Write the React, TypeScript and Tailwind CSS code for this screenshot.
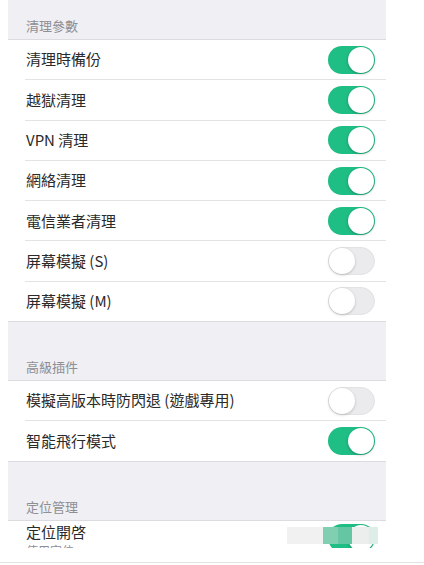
import React from 'react';

type Item = { label: string; on: boolean };

const CLEAN_ITEMS: Item[] = [
  { label: '清理時備份', on: true },
  { label: '越獄清理', on: true },
  { label: 'VPN 清理', on: true },
  { label: '網絡清理', on: true },
  { label: '電信業者清理', on: true },
  { label: '屏幕模擬 (S)', on: false },
  { label: '屏幕模擬 (M)', on: false },
];

const PLUGIN_ITEMS: Item[] = [
  { label: '模擬高版本時防閃退 (遊戲專用)', on: false },
  { label: '智能飛行模式', on: true },
];

const Toggle: React.FC<{ on: boolean }> = ({ on }) => (
  <div
    className={
      on
        ? 'relative w-[47px] h-[28px] rounded-full bg-[#1fbe85] shrink-0'
        : 'relative w-[47px] h-[28px] rounded-full bg-[#ebebed] border border-[#e2e2e5] shrink-0'
    }
  >
    <div
      className={
        on
          ? 'absolute top-[1px] right-[1px] w-[26px] h-[26px] rounded-full bg-white shadow-[0_1px_3px_rgba(0,0,0,0.25)]'
          : 'absolute top-[0px] left-[0px] w-[26px] h-[26px] rounded-full bg-white shadow-[0_1px_3px_rgba(0,0,0,0.2)]'
      }
    />
  </div>
);

const SectionHeader: React.FC<{ title: string; tall?: boolean }> = ({ title, tall }) => (
  <div
    className={
      (tall ? 'h-[59px]' : 'h-[40px]') +
      ' flex items-end pl-[18px] pb-[5px] border-b border-[#dcdce0]'
    }
  >
    <span className="text-[13px] leading-[16px] text-[#8e8e93]">{title}</span>
  </div>
);

const Section: React.FC<{ items: Item[] }> = ({ items }) => (
  <div className="bg-white border-b border-[#dcdce0]">
    {items.map((item, i) => (
      <div key={item.label} className="pl-[17px]">
        <div
          className={
            'flex items-center justify-between pr-[11px] ' +
            (i < items.length - 1 ? 'border-b border-[#e3e3e6] h-[40.3px]' : 'h-[39.3px]')
          }
        >
          <span className="pl-[1px] text-[15px] text-[#2a2a2a]">{item.label}</span>
          <Toggle on={item.on} />
        </div>
      </div>
    ))}
  </div>
);

export default function App() {
  return (
    <div
      className="w-[424px] h-[565px] bg-white overflow-hidden"
      style={{ fontFamily: '"Noto Sans CJK TC", "Noto Sans", sans-serif' }}
    >
      <div className="ml-[8px] w-[378px] h-[548px] overflow-hidden bg-[#efeff4]">
        <SectionHeader title="清理參數" />
        <Section items={CLEAN_ITEMS} />
        <SectionHeader title="高級插件" tall />
        <Section items={PLUGIN_ITEMS} />
        <SectionHeader title="定位管理" tall />
        <div className="relative bg-white h-[60px] pl-[18px] pr-[11px] flex justify-between">
          <div className="pt-[1px] flex flex-col">
            <span className="text-[15px] leading-[20px] text-[#2a2a2a]">定位開啓</span>
            <span className="text-[12px] leading-[16px] text-[#8e8e93] mt-[1px]">使用定位</span>
          </div>
          <div className="mt-[3px]">
            <Toggle on />
          </div>
          {/* mosaic blur over the toggle */}
          <div className="absolute top-[6px] left-[279px] h-[17px] flex">
            <div className="w-[36px] bg-[#f1f1f1]" />
            <div className="w-[15px] bg-[#80cfb2]" />
            <div className="w-[14px] bg-[#64c6a2]" />
            <div className="w-[17px] bg-[#eceeed]" />
            <div className="w-[9px] bg-[#dceee6]" />
          </div>
        </div>
      </div>
      <div className="mt-[14px] h-[1px] bg-[#e3e3e3]" />
    </div>
  );
}
